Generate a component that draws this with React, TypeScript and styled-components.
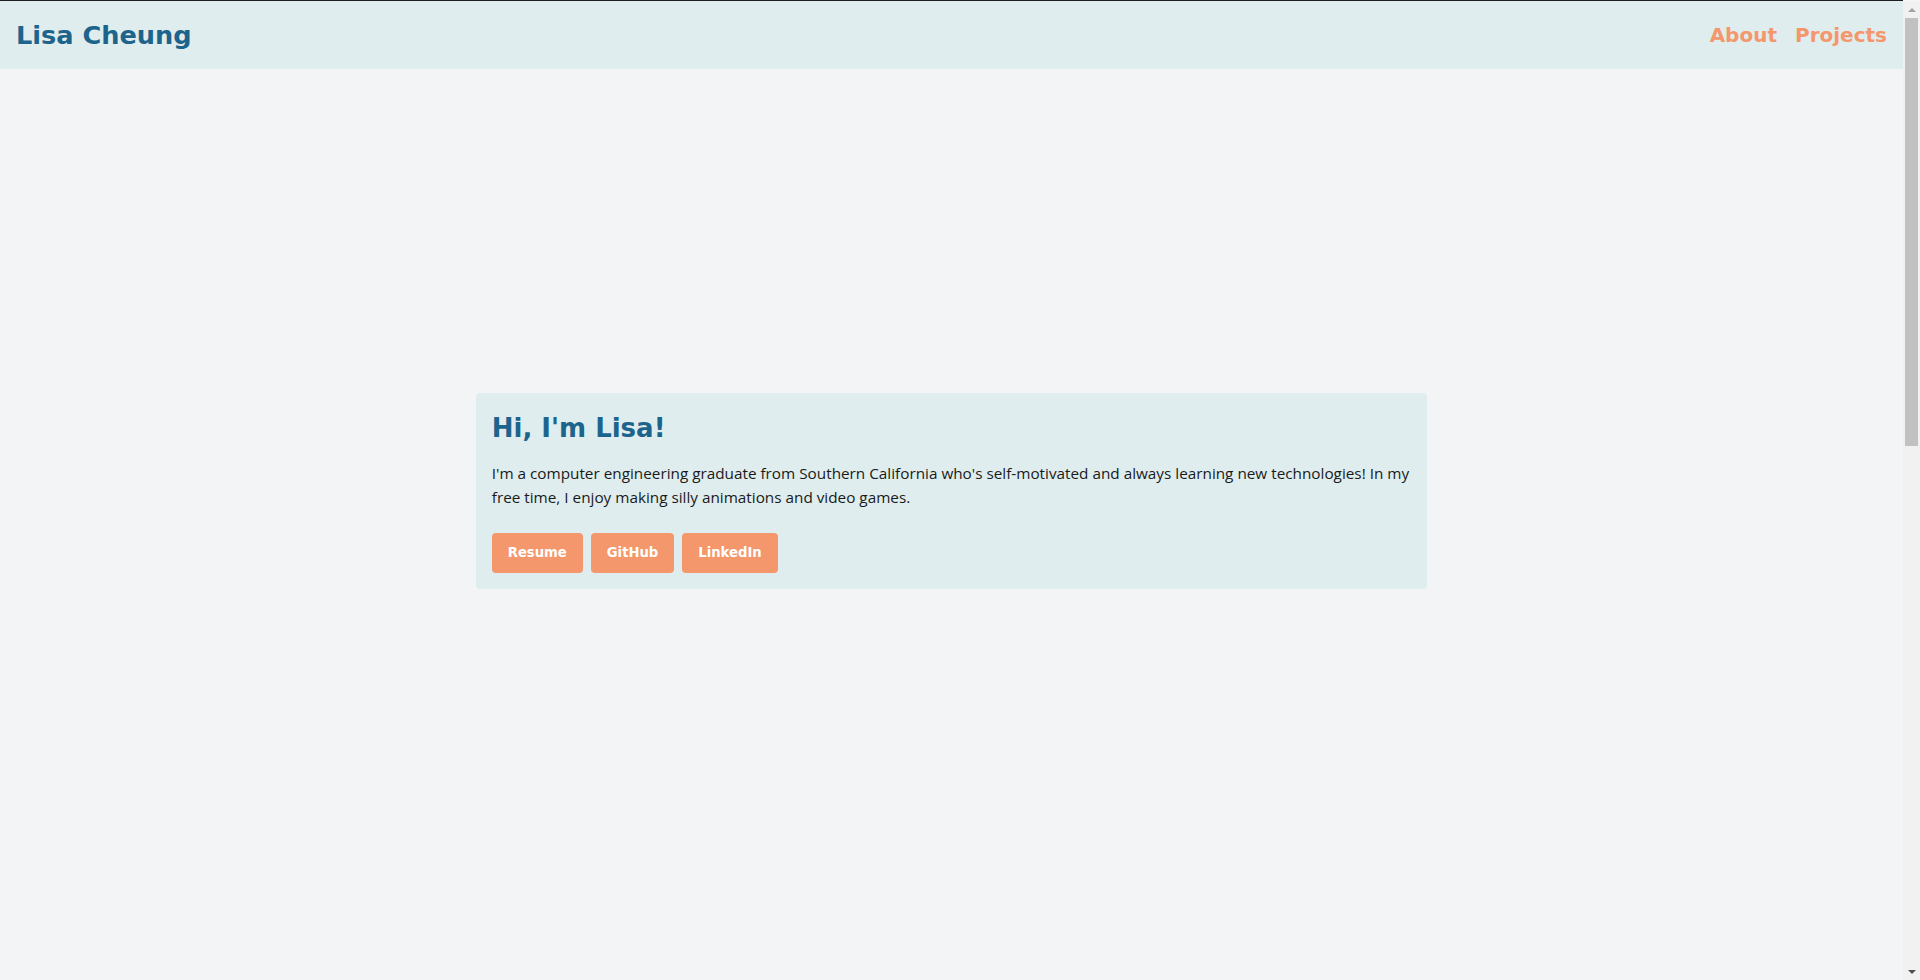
import styled, { createGlobalStyle } from "styled-components";

const GlobalStyle = createGlobalStyle`
  html, body {
    margin: 0;
    padding: 0;
  }
  body {
    background: #f3f4f6;
    font-family: "Open Sans", "Noto Sans", sans-serif;
    color: #111;
  }
  * {
    box-sizing: border-box;
  }
`;

const links = ["Resume", "GitHub", "LinkedIn"];

const App = () => {
  return (
    <>
      <GlobalStyle />
      <Page>
        <NavBar>
          <Brand>Lisa Cheung</Brand>
          <NavLinks>
            <NavLink href="#about">About</NavLink>
            <NavLink href="#projects">Projects</NavLink>
          </NavLinks>
        </NavBar>

        <Hero id="about">
          <IntroCard>
            <Heading>Hi, I'm Lisa!</Heading>
            <Blurb>
              I'm a computer engineering graduate from Southern California
              who's self-motivated and always learning new technologies! In my
              free time, I enjoy making silly animations and video games.
            </Blurb>
            <ButtonRow>
              {links.map((label) => (
                <LinkButton key={label} href="#">
                  {label}
                </LinkButton>
              ))}
            </ButtonRow>
          </IntroCard>
        </Hero>

        <ProjectsSection id="projects" />
      </Page>

      {/* classic windows-style scrollbar from the screenshot */}
      <ScrollTrack>
        <ScrollArrow $up />
        <ScrollThumb />
        <ScrollGap />
        <ScrollArrow />
      </ScrollTrack>
    </>
  );
};
export default App;

const boldFace = `"DejaVu Sans", Verdana, sans-serif`;

const Page = styled.div`
  margin-right: 17px;
`;

const NavBar = styled.header`
  position: fixed;
  top: 0;
  left: 0;
  right: 17px;
  z-index: 10;
  height: 69px;
  border-top: 1px solid #1f1f1f;
  background: #dfedee;
  display: flex;
  align-items: center;
  justify-content: space-between;
  padding: 0 16px;
`;

const Brand = styled.span`
  font-family: ${boldFace};
  font-size: 25.6px;
  font-weight: 700;
  color: #1c648c;
`;

const NavLinks = styled.nav`
  display: flex;
  gap: 18px;
`;

const NavLink = styled.a`
  font-family: ${boldFace};
  font-size: 20px;
  font-weight: 700;
  color: #f4976c;
  text-decoration: none;
`;

const Hero = styled.section`
  min-height: 100vh;
  display: flex;
  align-items: center;
  justify-content: center;
  padding-top: 1px;
`;

const IntroCard = styled.div`
  width: 50%;
  background: #dfedee;
  border-radius: 4px;
  padding: 16px;
`;

const Heading = styled.h1`
  margin: 0 0 16px;
  padding-top: 2px;
  font-family: ${boldFace};
  font-size: 26px;
  line-height: 34px;
  font-weight: 700;
  color: #1c648c;
`;

const Blurb = styled.p`
  margin: 0 0 24px;
  font-size: 15.3px;
  line-height: 24px;
  color: #1a1a1a;
`;

const ButtonRow = styled.div`
  display: flex;
  gap: 8px;
`;

const LinkButton = styled.a`
  height: 40px;
  padding: 0 16px;
  display: inline-flex;
  align-items: center;
  border-radius: 4px;
  background: #f4976c;
  color: #fff;
  font-family: ${boldFace};
  font-size: 13.2px;
  font-weight: 700;
  text-decoration: none;
`;

const ProjectsSection = styled.section`
  height: 1186px;
`;

const ScrollTrack = styled.div`
  position: fixed;
  top: 1px;
  right: 0;
  bottom: 0;
  width: 17px;
  background: #f1f1f1;
  display: flex;
  flex-direction: column;
`;

const ScrollArrow = styled.div<{ $up?: boolean }>`
  height: 17px;
  flex: none;
  display: flex;
  align-items: center;
  justify-content: center;

  &::before {
    content: "";
    border-left: 4px solid transparent;
    border-right: 4px solid transparent;
    ${({ $up }) =>
      $up
        ? "border-bottom: 4px solid #a3a3a3;"
        : "border-top: 4px solid #505050;"}
  }
`;

const ScrollThumb = styled.div`
  height: 428px;
  margin: 0 2px;
  background: #c1c1c1;
  flex: none;
`;

const ScrollGap = styled.div`
  flex: 1;
`;
